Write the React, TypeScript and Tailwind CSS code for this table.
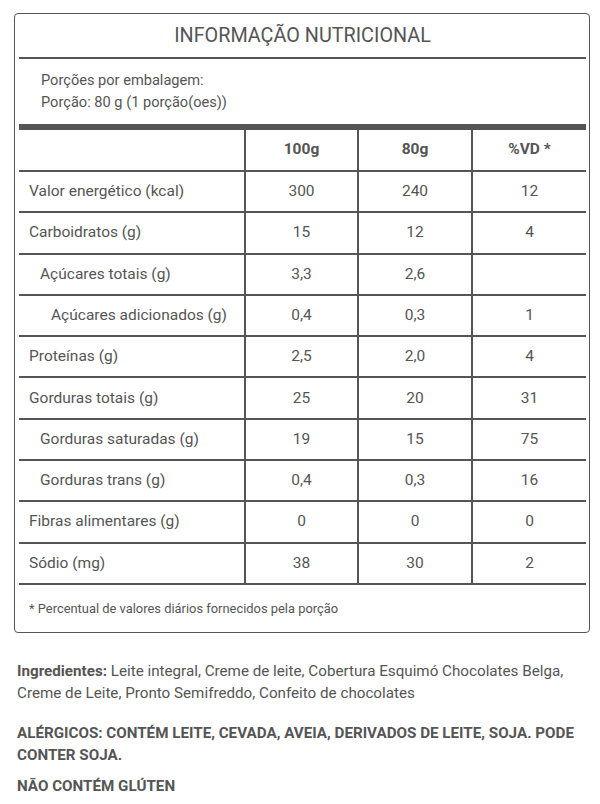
import React from "react";

type Row = { label: string; indent: 0 | 1 | 2; a: string; b: string; c: string };

const rows: Row[] = [
  { label: "Valor energético (kcal)", indent: 0, a: "300", b: "240", c: "12" },
  { label: "Carboidratos (g)", indent: 0, a: "15", b: "12", c: "4" },
  { label: "Açúcares totais (g)", indent: 1, a: "3,3", b: "2,6", c: "" },
  { label: "Açúcares adicionados (g)", indent: 2, a: "0,4", b: "0,3", c: "1" },
  { label: "Proteínas (g)", indent: 0, a: "2,5", b: "2,0", c: "4" },
  { label: "Gorduras totais (g)", indent: 0, a: "25", b: "20", c: "31" },
  { label: "Gorduras saturadas (g)", indent: 1, a: "19", b: "15", c: "75" },
  { label: "Gorduras trans (g)", indent: 1, a: "0,4", b: "0,3", c: "16" },
  { label: "Fibras alimentares (g)", indent: 0, a: "0", b: "0", c: "0" },
  { label: "Sódio (mg)", indent: 0, a: "38", b: "30", c: "2" },
];

function indentClass(i: 0 | 1 | 2) {
  if (i === 1) return "pl-[21px]";
  if (i === 2) return "pl-[32px]";
  return "pl-[10px]";
}

export default function App() {
  return (
    <div className="font-['Roboto',sans-serif] text-[#555] bg-white pt-[13px] pl-[14px] pb-[6px]">
      <div className="w-[576px] border border-[#555] rounded-[4px] pl-[4px] pr-[3px]">
        <div className="h-[45px] flex items-center justify-center text-[19.8px] border-b-2 border-[#555]">
          INFORMAÇÃO NUTRICIONAL
        </div>
        <div className="pt-[10px] pb-[11px] pl-[22px] text-[14.6px] leading-[22px]">
          <div>Porções por embalagem:</div>
          <div>Porção: 80 g (1 porção(oes))</div>
        </div>
        <div className="h-[6px] bg-[#555]" />
        <div className="grid grid-cols-[225px_113px_114px_115px] text-[15.5px]">
          <div className="h-[42px] border-b-2 border-[#555]" />
          <div className="h-[42px] border-b-2 border-l-2 border-[#555] flex items-center justify-center font-bold">100g</div>
          <div className="h-[42px] border-b-2 border-l-2 border-[#555] flex items-center justify-center font-bold">80g</div>
          <div className="h-[42px] border-b-2 border-l-2 border-[#555] flex items-center justify-center font-bold">%VD *</div>
          {rows.map((r) => (
            <React.Fragment key={r.label}>
              <div className={`h-[41.3px] border-b-2 border-[#555] flex items-center ${indentClass(r.indent)}`}>
                {r.label}
              </div>
              <div className="h-[41.3px] border-b-2 border-l-2 border-[#555] flex items-center justify-center">{r.a}</div>
              <div className="h-[41.3px] border-b-2 border-l-2 border-[#555] flex items-center justify-center">{r.b}</div>
              <div className="h-[41.3px] border-b-2 border-l-2 border-[#555] flex items-center justify-center">{r.c}</div>
            </React.Fragment>
          ))}
        </div>
        <div className="h-[47px] flex items-center pl-[10px] text-[12.9px]">
          * Percentual de valores diários fornecidos pela porção
        </div>
      </div>
      <div className="pl-[3px] w-[576px] text-[15.2px] leading-[22px] mt-[27px]">
        <p>
          <span className="font-bold">Ingredientes:</span> Leite integral, Creme de leite, Cobertura Esquimó
          Chocolates Belga, Creme de Leite, Pronto Semifreddo, Confeito de chocolates
        </p>
        <p className="mt-[18px] font-bold">
          ALÉRGICOS: CONTÉM LEITE, CEVADA, AVEIA, DERIVADOS DE LEITE, SOJA. PODE CONTER SOJA.
        </p>
        <p className="mt-[9px] font-bold">NÃO CONTÉM GLÚTEN</p>
      </div>
    </div>
  );
}
